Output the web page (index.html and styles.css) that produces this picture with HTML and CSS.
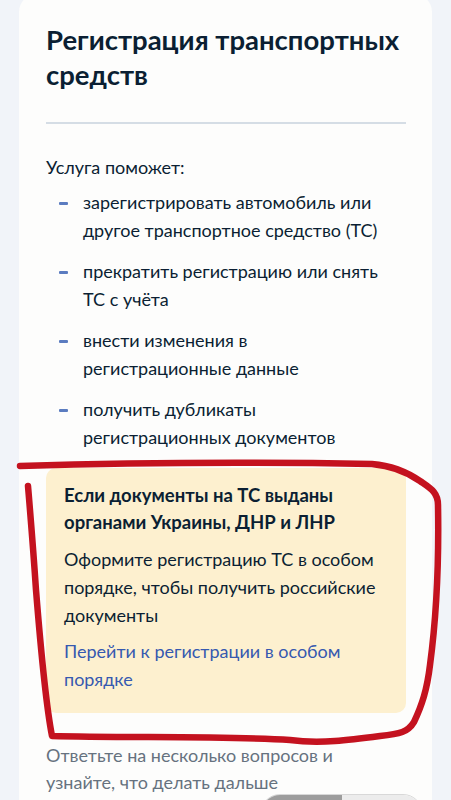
FILE: index.html
```html
<!DOCTYPE html>
<html lang="ru">
<head>
<meta charset="utf-8">
<title>Регистрация транспортных средств</title>
<link rel="stylesheet" href="styles.css">
</head>
<body>
<main class="card">
  <h1 class="title">Регистрация транспортных средств</h1>
  <hr class="divider">
  <p class="lead">Услуга поможет:</p>
  <ul class="list">
    <li>зарегистрировать автомобиль или другое транспортное средство (ТС)</li>
    <li>прекратить регистрацию или снять ТС с учёта</li>
    <li>внести изменения в регистрационные данные</li>
    <li>получить дубликаты регистрационных документов</li>
  </ul>
  <section class="notice">
    <h2 class="notice-title">Если документы на ТС выданы органами Украины, ДНР и ЛНР</h2>
    <p class="notice-text">Оформите регистрацию ТС в особом порядке, чтобы получить российские документы</p>
    <a class="notice-link" href="#">Перейти к регистрации в особом порядке</a>
  </section>
  <p class="hint">Ответьте на несколько вопросов и узнайте, что делать дальше</p>
  <div class="toggle"><span class="toggle-on"></span><span class="toggle-off"></span></div>
</main>
<svg class="scribble" width="451" height="800" viewBox="0 0 451 800" aria-hidden="true">
  <path d="M20 466 C 120 463, 260 462, 372 464 C 395 466, 410 474, 420 481 C 430 488, 438 492, 438 505 C 439 560, 436 620, 430 665 C 427 690, 422 705, 414 722 C 408 732, 400 734, 380 736 C 350 740, 320 744, 290 740 C 230 736, 120 738, 52 736 C 45 700, 40 640, 36 590 C 33 545, 30 510, 28 486" fill="none" stroke="#c4121f" stroke-width="6.5" stroke-linecap="round" stroke-linejoin="round"/>
</svg>
</body>
</html>
```
FILE: styles.css
```css
html, body {
  margin: 0;
  padding: 0;
}
body {
  background: #f1f4f9;
  font-family: Lato, "Noto Sans", sans-serif;
  color: #0b1f33;
  width: 451px;
  height: 800px;
  overflow: hidden;
  position: relative;
}
.card {
  margin: -6px 19px 0 19px;
  background: #fdfdfc;
  border-radius: 18px 18px 0 0;
  padding: 28px 26px 0 27px;
  min-height: 900px;
}
.title {
  margin: 0;
  font-size: 27.5px;
  line-height: 35px;
  font-weight: 700;
  letter-spacing: 0;
}
.divider {
  border: 0;
  height: 2px;
  background: #d5dde5;
  margin: 30px 0 0 0;
}
.lead {
  margin: 29px 0 0 0;
  font-size: 18px;
  line-height: 28px;
}
.list {
  list-style: none;
  margin: 7px 0 0 0;
  padding: 0 0 0 37px;
  display: flex;
  flex-direction: column;
  gap: 13px;
}
.list li {
  position: relative;
  max-width: 312px;
  font-size: 18px;
  line-height: 28px;
}
.list li::before {
  content: "";
  position: absolute;
  left: -24px;
  top: 14px;
  width: 9px;
  height: 2.5px;
  background: #5b7cc0;
  border-radius: 1px;
}
.notice {
  margin-top: 17px;
  background: #fdf0cf;
  border-radius: 10px;
  padding: 14px 18px 20px 18px;
}
.notice-title {
  margin: 0;
  font-size: 18.5px;
  line-height: 27px;
  font-weight: 700;
}
.notice-text {
  margin: 9px 0 0 0;
  font-size: 18px;
  line-height: 28px;
}
.notice-link {
  display: block;
  margin-top: 8px;
  font-size: 18px;
  line-height: 28px;
  color: #3659b0;
  text-decoration: none;
}
.hint {
  margin: 29px 0 0 0;
  font-size: 18px;
  line-height: 27px;
  color: #66727f;
}
.toggle {
  display: flex;
  margin: -2px 0 0 214px;
  width: 163px;
  height: 40px;
  border-radius: 20px;
  overflow: hidden;
  border: 1px solid #d8d8d8;
  box-sizing: border-box;
}
.toggle-on {
  flex: 1;
  background: #9d9d9d;
}
.toggle-off {
  flex: 1;
  background: #ececec;
}
.scribble {
  position: absolute;
  top: 0;
  left: 0;
  pointer-events: none;
}
```
